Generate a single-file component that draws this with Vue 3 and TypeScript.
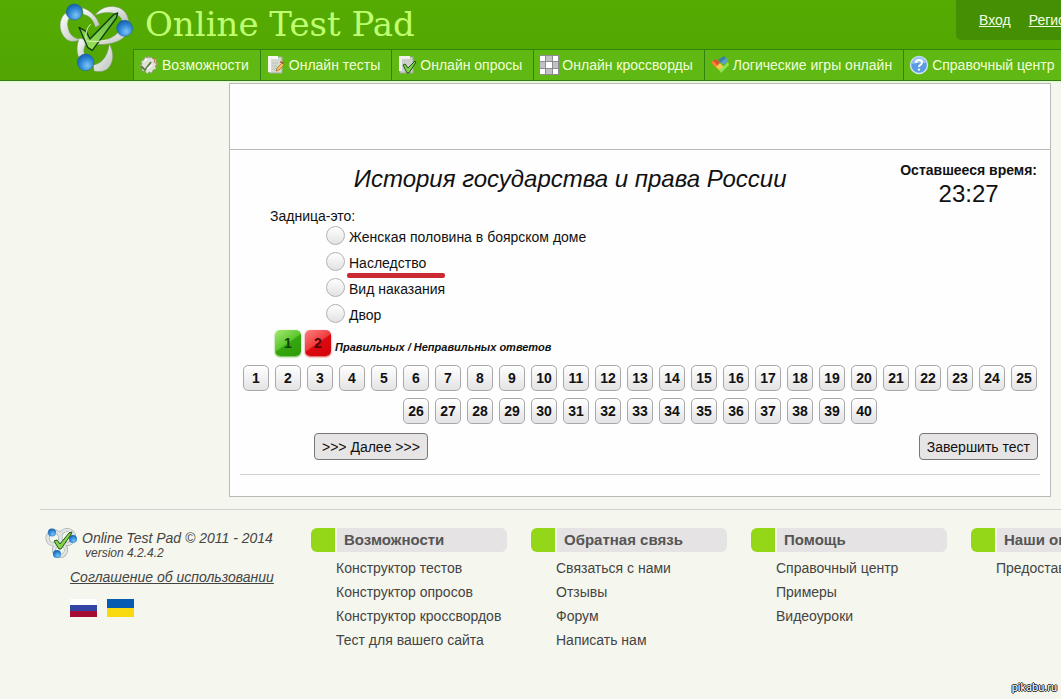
<script setup lang="ts">
import { ref } from 'vue'

interface NavItem { icon: string; label: string }
interface FooterColumn { title: string; links: string[] }

const navItems: NavItem[] = [
  { icon: 'gear', label: 'Возможности' },
  { icon: 'test', label: 'Онлайн тесты' },
  { icon: 'poll', label: 'Онлайн опросы' },
  { icon: 'cross', label: 'Онлайн кроссворды' },
  { icon: 'games', label: 'Логические игры онлайн' },
  { icon: 'help', label: 'Справочный центр' },
]

const answers: string[] = ['Женская половина в боярском доме', 'Наследство', 'Вид наказания', 'Двор']
const marked = 1
const selected = ref<number | null>(null)
const questionCount = 40

const columns: FooterColumn[] = [
  { title: 'Возможности', links: ['Конструктор тестов', 'Конструктор опросов', 'Конструктор кроссвордов', 'Тест для вашего сайта'] },
  { title: 'Обратная связь', links: ['Связаться с нами', 'Отзывы', 'Форум', 'Написать нам'] },
  { title: 'Помощь', links: ['Справочный центр', 'Примеры', 'Видеоуроки'] },
  { title: 'Наши опросы', links: ['Предоставить'] },
]
</script>

<template>
  <div class="page">
    <svg class="defs" width="0" height="0" aria-hidden="true">
      <defs>
        <radialGradient id="ball" cx="0.6" cy="0.7" r="0.7">
          <stop offset="0" stop-color="#7cc4f4" />
          <stop offset="0.6" stop-color="#2f86d6" />
          <stop offset="1" stop-color="#1560ae" />
        </radialGradient>
        <linearGradient id="silver" x1="0" y1="0" x2="1" y2="1">
          <stop offset="0" stop-color="#ffffff" />
          <stop offset="1" stop-color="#b9c2b8" />
        </linearGradient>
        <linearGradient id="tick" x1="0" y1="0" x2="0" y2="1">
          <stop offset="0" stop-color="#5fb548" />
          <stop offset="1" stop-color="#9be456" />
        </linearGradient>
        <symbol id="logo" viewBox="54 0 228 222">
          <g fill="url(#silver)" stroke="#76906c" stroke-width="1.5">
            <path d="M76 40C55 58 54 98 81 119C95 128 111 124 125 118C104 116 91 107 86 90C81 73 82 58 90 53Z" />
            <path d="M127 23C150 31 171 49 179 75L166 82C160 59 148 47 130 43Z" />
            <path d="M165 46C182 22 211 13 239 24C256 32 265 49 266 66L247 65C244 50 231 40 213 38C195 36 180 40 165 46Z" />
            <path d="M258 105C236 134 184 139 138 129L139 121C180 128 216 118 235 97Z" />
            <path d="M118 115C109 137 110 157 116 172L134 164C129 150 132 136 147 121Z" />
            <path d="M208 132C223 159 221 186 206 203C196 215 178 217 162 213L160 195C181 192 202 176 208 132Z" />
          </g>
          <path d="M117 82L138 94L150 117L222 43L233 39L229 54L157 151L143 142L126 103Z" fill="url(#tick)" stroke="#123d12" stroke-width="4" stroke-linejoin="round" />
          <path d="M152 72Q134 91 138 119M139 123Q171 128 202 120" fill="none" stroke="#e5efc5" stroke-width="3" />
          <g fill="url(#ball)" stroke="#1c5d9c" stroke-width="1.5">
            <circle cx="103" cy="36" r="24" />
            <circle cx="254" cy="85" r="24" />
            <circle cx="137" cy="187" r="25" />
          </g>
        </symbol>
      </defs>
    </svg>

    <header class="top">
      <a class="brand-mark" href="#" aria-label="Online Test Pad"><svg class="logo"><use href="#logo" /></svg></a>
      <div class="top-body">
        <div class="title-row">
          <a class="title" href="#">Online Test Pad</a>
          <div class="login">
            <a href="#">Вход</a>
            <a href="#">Регистрация</a>
          </div>
        </div>
        <nav class="nav">
          <a v-for="item in navItems" :key="item.label" href="#">
            <svg class="icon" viewBox="0 0 20 20" aria-hidden="true">
              <g v-if="item.icon === 'gear'">
                <path d="M9 1l2 2 2-1 1 2 3 0 0 3 2 2-2 2 0 3-3 1-1 3-3-1-2 2-2-3-3 0 0-3-2-2 2-2-1-3 3-1 1-3 3 1z" fill="#dfe2d6" stroke="#8d9484" stroke-width="0.6" />
                <path d="M13 3l3 1-1 3 3 2-2 3" fill="none" stroke="#b87850" stroke-width="1" />
                <path d="M2 11l4 4 6-8" fill="none" stroke="#5f7a48" stroke-width="1.8" />
                <path d="M8 14l5-4M5 6l3-2" stroke="#fff" stroke-width="1.5" />
              </g>
              <g v-else-if="item.icon === 'test'">
                <path d="M3 2h13v16H3z" fill="#d5d9d2" stroke="#a5aea0" />
                <path d="M2 1h10v3H5v13H2z" fill="#f5f6f0" />
                <path d="M6 8h6M6 11h5M6 14h5" stroke="#bcc2ba" />
                <path d="M16 8l2 2-5 5-3 1 1-3z" fill="#f0c25a" stroke="#a7632a" stroke-width="0.7" />
                <path d="M14 7l4 1" stroke="#c25137" stroke-width="1.5" />
              </g>
              <g v-else-if="item.icon === 'poll'">
                <path d="M3 2h13v16H3z" fill="#cbd1ca" stroke="#a0aa9c" />
                <path d="M2 1h11v3H5v12H2z" fill="#eef1eb" />
                <path d="M6 10l2-1 3 4 7-7 1 1-7 11h-2z" fill="#7fd04a" stroke="#235418" stroke-width="1" />
              </g>
              <g v-else-if="item.icon === 'cross'">
                <path d="M0 0h20v20H0z" fill="#8c8c90" />
                <path d="M1 1h5v5H1zM14 1h5v5h-5zM7 7h6v6H7zM1 14h5v5H1zM14 14h5v5h-5z" fill="#fff" />
                <path d="M7 1h6v5H7zM1 7h5v6H1zM14 7h5v6h-5zM7 14h6v5H7z" fill="#c2c1c8" />
              </g>
              <g v-else-if="item.icon === 'games'">
                <path d="M1 7l5-3 4 4-4 5z" fill="#e0522c" />
                <path d="M1 7l2-1 5 5-2 2z" fill="#f28c3a" />
                <path d="M8 5l6-4 2 2-5 5z" fill="#367fae" />
                <path d="M11 7l6-4 1 3-4 4z" fill="#5e9fc8" />
                <path d="M6 12l4-4 4 4-3 5z" fill="#f2cd4a" />
                <path d="M9 13l2 1 7-7 1 3-8 8z" fill="#8ee356" />
              </g>
              <g v-else>
                <circle cx="10" cy="10" r="8.5" fill="#5a9be3" stroke="#cfe3f7" stroke-width="1.4" />
                <path d="M3 9a7 7 0 0 1 14-1q-7-1-14 1" fill="#9cc6f2" />
                <path d="M7 8q0-3 3-3t3 2.600q0 1.400-1.500 2.200T10 12" fill="none" stroke="#fff" stroke-width="2" />
                <circle cx="10" cy="14.600" r="1.200" fill="#fff" />
              </g>
            </svg>
            <span>{{ item.label }}</span>
          </a>
        </nav>
      </div>
    </header>

    <main class="panel">
      <div class="banner"></div>
      <div class="quiz">
        <div class="quiz-head">
          <h1>История государства и права России</h1>
          <div class="timer"><b>Оставшееся время:</b><span>23:27</span></div>
        </div>
        <fieldset class="question">
          <legend>Задница-это:</legend>
          <label v-for="(answer, i) in answers" :key="answer">
            <input v-model="selected" type="radio" name="answer" :value="i" />
            <span :class="{ marked: i === marked }">{{ answer }}</span>
          </label>
        </fieldset>
        <div class="score">
          <span class="badge good">1</span>
          <span class="badge bad">2</span>
          <em>Правильных / Неправильных ответов</em>
        </div>
        <div class="numbers">
          <button v-for="n in questionCount" :key="n" type="button">{{ n }}</button>
        </div>
        <div class="actions">
          <button type="button">&gt;&gt;&gt; Далее &gt;&gt;&gt;</button>
          <button type="button">Завершить тест</button>
        </div>
      </div>
    </main>

    <footer class="footer">
      <div class="about">
        <div class="about-brand">
          <svg class="logo-small" viewBox="0 0 32 30" aria-hidden="true">
            <g fill="none" stroke="#8e9a9c" stroke-width="4">
              <circle cx="9" cy="10" r="6.5" />
              <circle cx="22" cy="9" r="7" />
              <circle cx="15" cy="22" r="6" />
            </g>
            <g fill="none" stroke="#dfe4e2" stroke-width="3">
              <circle cx="9" cy="10" r="6.5" />
              <circle cx="22" cy="9" r="7" />
              <circle cx="15" cy="22" r="6" />
            </g>
            <g fill="url(#ball)">
              <circle cx="7" cy="4.500" r="4" />
              <circle cx="28" cy="11" r="4" />
              <circle cx="12" cy="26" r="4" />
            </g>
            <path d="M9 13l3-1 3 4L24 5l3-1-2 4-9 13h-2z" fill="#83d64b" stroke="#23531c" stroke-width="1" stroke-linejoin="round" />
          </svg>
          <div class="copy">
            <span>Online Test Pad © 2011 - 2014</span>
            <small>version 4.2.4.2</small>
          </div>
        </div>
        <a class="terms" href="#">Соглашение об использовании</a>
        <div class="flags">
          <a href="#" aria-label="Русский"><span class="flag ru"></span></a>
          <a href="#" aria-label="Українська"><span class="flag ua"></span></a>
        </div>
      </div>
      <section v-for="col in columns" :key="col.title" class="col">
        <h2>{{ col.title }}</h2>
        <ul>
          <li v-for="link in col.links" :key="link"><a href="#">{{ link }}</a></li>
        </ul>
      </section>
    </footer>
    <span class="watermark">pikabu.ru</span>
  </div>
</template>

<style>
body { background: #f5f6ed; }
</style>

<style scoped>
.page {
  position: relative;
  min-height: 100vh;
  overflow: hidden;
  background: #f5f6ed;
  color: #111;
  font-family: "Liberation Sans", Arial, sans-serif;
  font-size: 14px;
}
.page * { box-sizing: border-box; }
.defs { position: absolute; }
a { color: inherit; text-decoration: none; }
button { font-family: inherit; color: #111; cursor: pointer; }

.top {
  display: flex;
  padding-left: 58px;
  background: linear-gradient(#55ab02, #52a502);
  border-bottom: 1px solid #2f7f12;
  box-shadow: 0 2px 0 #e9f8d8;
}
.brand-mark { flex: none; width: 75px; height: 80px; }
.logo { display: block; width: 76px; height: 74px; }
.top-body { flex: 1; min-width: 0; }
.title-row { display: flex; justify-content: space-between; height: 49px; }
.title {
  padding-left: 12px;
  color: #bfff72;
  font: 34px/48px "DejaVu Serif", serif;
  white-space: nowrap;
}
.login {
  display: flex;
  gap: 18px;
  width: 105px;
  height: 40px;
  padding-left: 23px;
  overflow: hidden;
  background: #448f03;
  border-bottom-left-radius: 5px;
  color: #f4ffe2;
  line-height: 40px;
}
.login a { text-decoration: underline; }
.nav { display: flex; height: 31px; overflow: hidden; border-top: 1px solid #2f8510; background: #60b812; }
.nav a {
  display: flex;
  flex: none;
  align-items: center;
  gap: 3px;
  padding: 0 11px 0 5px;
  border-left: 1px solid #2f8510;
  color: #f1ffd9;
  white-space: nowrap;
}
.icon { width: 20px; height: 20px; }

.panel { margin: 2px 10px 0 229px; background: #fefefe; border: 1px solid #b8bab5; }
.banner { height: 66px; border-bottom: 1px solid #b8bab5; }
.quiz { padding: 10px 10px 21px; }
.quiz-head { display: flex; }
h1 { flex: 1; margin: 0; font-size: 24px; font-style: italic; font-weight: 400; line-height: 38px; height: 48px; text-align: center; }
.timer { display: flex; flex-direction: column; align-items: center; padding-right: 3px; line-height: 20px; }
.timer span { font-size: 24px; line-height: 28px; }
.question { display: flex; flex-direction: column; margin: 0; padding: 0 0 0 86px; border: 0; }
.question legend { margin-left: -56px; padding: 0; line-height: 16px; }
.question label { display: flex; gap: 4px; height: 26px; }
.question label span { position: relative; align-self: flex-start; line-height: 26px; }
.question input {
  appearance: none;
  width: 19px;
  height: 19px;
  margin: 2px 0 0;
  border: 1px solid #b2b2b2;
  border-radius: 50%;
  background: linear-gradient(#fff, #e2e2e2);
}
.question input:checked { background: radial-gradient(#444 30%, #eee 35%); }
.marked::after {
  content: "";
  position: absolute;
  top: 23px;
  left: -2px;
  width: 98px;
  height: 5px;
  border-radius: 2px;
  background: #cb2a33;
}
.score { display: flex; gap: 4px; padding: 2px 0 9px 35px; }
.badge {
  width: 26px;
  height: 26px;
  border-radius: 5px;
  font-weight: 700;
  line-height: 26px;
  text-align: center;
}
.good { background: linear-gradient(145deg, #a6ea72, #5cc72e 48%, #35a70d 52%, #2d9b0b); box-shadow: 0 1px 2px #58b53a; color: #12400b; }
.bad { background: linear-gradient(145deg, #ff7f7f, #ef3d40 48%, #d90a10 52%, #d50208); box-shadow: 0 1px 2px #d84848; color: #4c0606; }
.score em { font-size: 11px; font-weight: 700; line-height: 34px; height: 26px; }
.numbers { display: flex; flex-wrap: wrap; justify-content: center; gap: 7px 6px; }
.numbers button {
  width: 26px;
  height: 26px;
  padding: 0;
  border: 1px solid #a8a8a8;
  border-radius: 5px;
  background: linear-gradient(#fff, #e3e3e6);
  font-size: 14px;
  font-weight: 700;
}
.actions { display: flex; justify-content: space-between; padding: 9px 2px 14px 74px; border-bottom: 1px solid #cfcfcf; }
.actions button { height: 27px; padding: 0 7px; border: 1px solid #777; border-radius: 4px; background: #e6e4e5; font-size: 14px; }

.footer {
  display: grid;
  grid-template-columns: 270px repeat(4, 220px);
  margin: 12px 0 0 40px;
  padding: 18px 0 40px;
  border-top: 1px solid #d0d1ca;
  color: #444;
}
.about { display: flex; flex-direction: column; padding-left: 5px; font-style: italic; }
.about-brand { display: flex; gap: 5px; }
.logo-small { width: 32px; height: 30px; }
.copy { display: flex; flex-direction: column; padding-top: 1px; line-height: 18px; white-space: nowrap; }
.copy small { padding-left: 3px; font-size: 12px; line-height: 12px; }
.terms { margin: 8px 0 12px 25px; line-height: 20px; text-decoration: underline; white-space: nowrap; }
.flags { display: flex; gap: 10px; padding-left: 25px; }
.flag { display: block; width: 27px; height: 18px; }
.ru { background: linear-gradient(#fff 33%, #3345a5 33% 66%, #a50d32 66%); }
.ua { background: linear-gradient(#075bb0 50%, #f9d90f 50%); }
.col { padding-left: 1px; }
h2 {
  width: 196px;
  margin: 0;
  padding-left: 9px;
  border-left: 24px solid #94d618;
  border-radius: 6px;
  background: linear-gradient(90deg, #f5f6ed 2px, #e5e3e3 2px);
  color: #555;
  font-size: 15px;
  line-height: 24px;
  white-space: nowrap;
}
ul { margin: 4px 0 0; padding: 0 0 0 25px; list-style: none; }
li { line-height: 24px; white-space: nowrap; }
.watermark {
  position: absolute;
  right: 4px;
  bottom: 4px;
  color: #fff;
  font: 11px/14px Roboto, sans-serif;
  text-shadow: 1px 0 #222, -1px 0 #222, 0 1px #222, 0 -1px #222;
}
</style>
